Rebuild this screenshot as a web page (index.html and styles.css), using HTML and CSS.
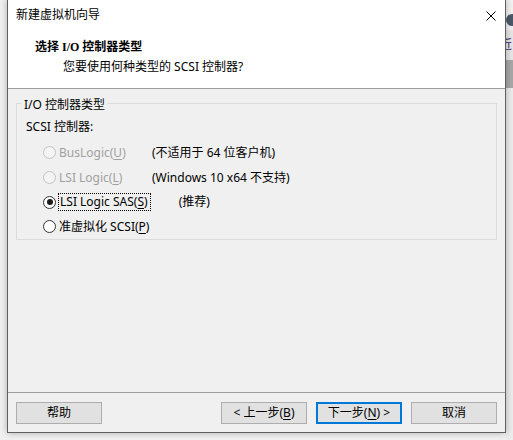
FILE: index.html
```html
<!DOCTYPE html>
<html lang="zh-CN">
<head>
<meta charset="utf-8">
<title>新建虚拟机向导</title>
<link rel="stylesheet" href="styles.css">
</head>
<body>
<div class="screen">
  <div class="window">
    <div class="titlebar">
      <span class="title">新建虚拟机向导</span>
      <svg class="close" width="10" height="10" viewBox="0 0 10 10"><path d="M0.5 0.5 L9.5 9.5 M9.5 0.5 L0.5 9.5" stroke="#000" stroke-width="1" fill="none"/></svg>
    </div>
    <div class="header">
      <div class="h-title">选择 I/O 控制器类型</div>
      <div class="h-sub">您要使用何种类型的 SCSI 控制器?</div>
    </div>
    <div class="body">
      <div class="group">
        <span class="group-label">I/O 控制器类型</span>
        <div class="scsi-label">SCSI 控制器:</div>
        <div class="row r25 disabled">
          <span class="radio"></span>
          <span class="opt">BusLogic(<u>U</u>)</span>
          <span class="note">(不适用于 64 位客户机)</span>
        </div>
        <div class="row r25 disabled">
          <span class="radio"></span>
          <span class="opt">LSI Logic(<u>L</u>)</span>
          <span class="note">(Windows 10 x64 不支持)</span>
        </div>
        <div class="row r24">
          <span class="radio checked"></span>
          <span class="opt focus">LSI Logic SAS(<u>S</u>)</span>
          <span class="note rec">(推荐)</span>
        </div>
        <div class="row r25">
          <span class="radio"></span>
          <span class="opt">准虚拟化 SCSI(<u>P</u>)</span>
        </div>
      </div>
    </div>
    <div class="footer">
      <button class="btn">帮助</button>
      <div class="spacer"></div>
      <button class="btn">&lt; 上一步(<u>B</u>)</button>
      <button class="btn default">下一步(<u>N</u>) &gt;</button>
      <button class="btn">取消</button>
    </div>
  </div>
  <div class="strip">
    <div class="strip-top"><span class="strip-icon"></span></div>
    <div class="strip-text">近</div>
    <div class="strip-band"></div>
  </div>
</div>
</body>
</html>
```

FILE: styles.css
```css
* { box-sizing: border-box; }
html, body {
  margin: 0;
  padding: 0;
}
body {
  width: 513px;
  height: 440px;
  overflow: hidden;
  background: #f1f1f1;
  font-family: "Noto Sans", "Noto Sans CJK SC", sans-serif;
  font-size: 12px;
  color: #000;
}
.screen {
  display: flex;
  height: 440px;
  padding-left: 7px;
}
.window {
  width: 499px;
  height: 434px;
  margin-top: -1px;
  border: 1px solid #5f5f5f;
  background: #f0f0f0;
  display: flex;
  flex-direction: column;
  box-shadow: 0 0 7px rgba(0,0,0,0.28);
  position: relative;
  z-index: 1;
}
.titlebar {
  height: 30px;
  background: #fff;
  display: flex;
  align-items: center;
  padding-left: 8px;
  padding-right: 9px;
  line-height: 16px;
}
.title { flex: 1; }
.close { display: block; margin-top: 1px; }
.header {
  height: 59px;
  background: #fff;
  border-bottom: 1px solid #a0a0a0;
  padding-left: 27px;
  padding-top: 9px;
  line-height: 16px;
}
.h-title {
  font-family: "Liberation Serif", "Noto Sans CJK SC", serif;
  font-weight: bold;
  font-size: 12px;
  height: 20px;
}
.h-sub {
  padding-left: 28px;
}
.body {
  flex: 1;
  padding: 14px 8px 0 8px;
}
.group {
  position: relative;
  border: 1px solid #dcdcdc;
  height: 137px;
  padding-top: 15px;
}
.group-label {
  position: absolute;
  top: -7px;
  left: 4px;
  padding: 0 3px;
  background: #f0f0f0;
  line-height: 16px;
}
.scsi-label {
  line-height: 16px;
  padding-left: 9px;
  height: 21px;
}
.row {
  display: flex;
  align-items: center;
  padding-left: 26px;
  line-height: 16px;
}
.r25 { height: 25px; }
.r24 { height: 24px; }
.radio {
  width: 13px;
  height: 13px;
  border: 1px solid #333;
  border-radius: 50%;
  background: #fff;
  position: relative;
  flex: none;
}
.radio.checked::after {
  content: "";
  position: absolute;
  left: 2.5px;
  top: 2.5px;
  width: 6px;
  height: 6px;
  border-radius: 50%;
  background: #1b1b1b;
}
.disabled .radio {
  border-color: #c3c3c3;
  background: #f4f4f4;
}
.opt {
  margin-left: 3px;
  width: 93px;
  flex: none;
  white-space: nowrap;
}
.disabled .opt { color: #a0a0a0; }
.opt.focus {
  width: auto;
  outline: 1px dotted #000;
  outline-offset: 0;
  padding: 0 2px 0 1px;
  margin-left: 3px;
  margin-right: 29px;
}
.note { white-space: nowrap; }
u { text-decoration: underline; text-underline-offset: 2px; }
.footer {
  height: 40px;
  border-top: 1px solid #a0a0a0;
  display: flex;
  padding: 9px 8px 8px 8px;
  gap: 9px;
}
.spacer { flex: 1; }
.btn {
  width: 86px;
  height: 22px;
  background: #e1e1e1;
  border: 1px solid #adadad;
  font: inherit;
  color: #000;
  padding: 0;
  line-height: 18px;
}
.btn.default {
  border: 2px solid #0078d7;
}
.strip {
  width: 7px;
  display: flex;
  flex-direction: column;
  background: #ececec;
  overflow: hidden;
}
.strip-top {
  height: 30px;
  background: #f2f2f2;
  position: relative;
}
.strip-icon {
  position: absolute;
  left: 0;
  top: 14px;
  width: 12px;
  height: 12px;
  border-radius: 50%;
  background: #4b5968;
}
.strip-text {
  height: 30px;
  line-height: 30px;
  margin-left: -6px;
  color: #4a2a6a;
  background: #e6e6e6;
}
.strip-band {
  height: 28px;
  background: #a7a7a7;
}
```
